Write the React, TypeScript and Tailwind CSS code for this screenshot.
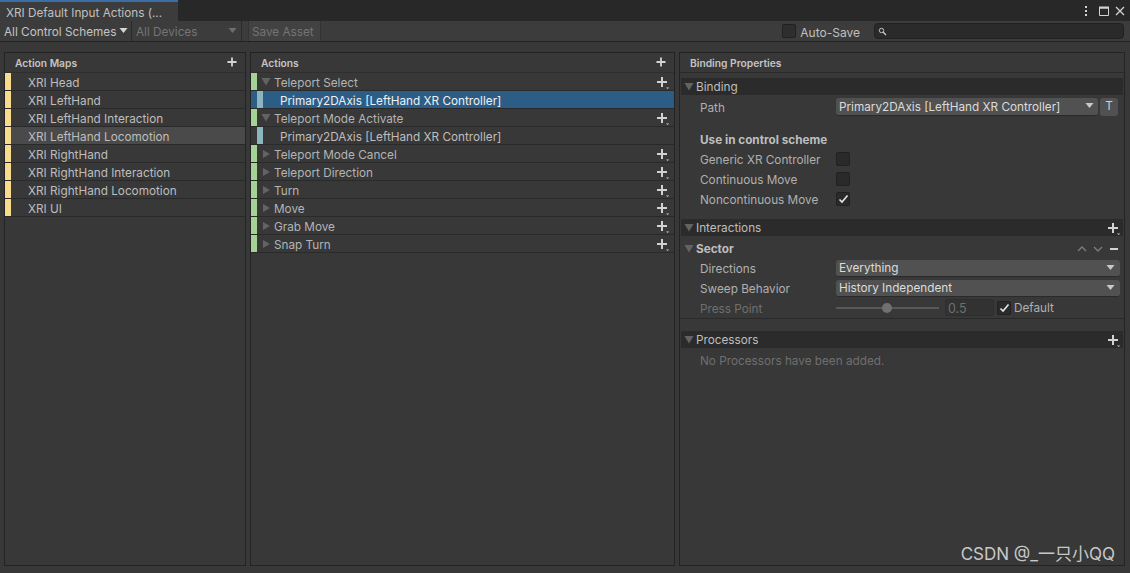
const maps = [
  "XRI Head",
  "XRI LeftHand",
  "XRI LeftHand Interaction",
  "XRI LeftHand Locomotion",
  "XRI RightHand",
  "XRI RightHand Interaction",
  "XRI RightHand Locomotion",
  "XRI UI",
];

const actions = [
  { name: "Teleport Select", open: true, binding: "Primary2DAxis [LeftHand XR Controller]", selected: true },
  { name: "Teleport Mode Activate", open: true, binding: "Primary2DAxis [LeftHand XR Controller]", selected: false },
  { name: "Teleport Mode Cancel" },
  { name: "Teleport Direction" },
  { name: "Turn" },
  { name: "Move" },
  { name: "Grab Move" },
  { name: "Snap Turn" },
];

const PlusMore = () => (
  <svg width="14" height="14" viewBox="0 0 14 14" className="mt-[3px] shrink-0">
    <path d="M5 1h2v4h4v2H7v4H5V7H1V5h4z" fill="#d2d2d2" />
    <path d="M10 11.5h3.2l-1.6 1.5z" fill="#c4c4c4" />
  </svg>
);

const Plus = () => (
  <svg width="10" height="10" viewBox="0 0 11 11" className="mb-[2px] shrink-0">
    <path d="M4.5 0.5h2v4h4v2h-4v4h-2v-4h-4v-2h4z" fill="#d2d2d2" />
  </svg>
);

const Fold = ({ open }: { open?: boolean }) => (
  <svg width="10" height="10" viewBox="0 0 10 10" className="mt-[1px] shrink-0">
    {open ? <path d="M0.5 1h9L5 8.5z" fill="#636363" /> : <path d="M2 1v8l7-4z" fill="#636363" />}
  </svg>
);

const Caret = ({ color = "#c8c8c8" }: { color?: string }) => (
  <svg width="9" height="6" viewBox="0 0 9 6" className="shrink-0">
    <path d="M0.5 0h8L4.5 5z" fill={color} />
  </svg>
);

const Check = () => (
  <svg width="11" height="10" viewBox="0 0 11 10">
    <path d="M1.5 5.5 4 8l5.5-6.5" stroke="#e6e6e6" strokeWidth="1.6" fill="none" />
  </svg>
);

const Box = ({ checked }: { checked?: boolean }) => (
  <div className="mb-[2px] flex h-[14px] w-[14px] items-center justify-center rounded-[2px] border border-[#212121] bg-[#2a2a2a]">
    {checked && <Check />}
  </div>
);

const Section = ({ title, add }: { title: string; add?: boolean }) => (
  <div className="mx-[1px] flex h-[17px] items-center bg-[#2b2b2b] pl-[3px] pr-[2px] text-[#bebebe]">
    <Fold open />
    <span className="ml-[2px] flex-1 pt-[3px]">{title}</span>
    {add && <PlusMore />}
  </div>
);

const Select = ({ label }: { label: string }) => (
  <div className="flex h-[17px] w-[284px] items-center rounded-[3px] border-b border-[#2a2a2a] bg-[#515151] pl-[3px] pr-[5px] text-[#dcdcdc]">
    <span className="flex-1 pt-[2px]">{label}</span>
    <Caret />
  </div>
);

const CheckRow = ({ label, checked }: { label: string; checked?: boolean }) => (
  <div className="flex h-[20px] items-center pl-[20px] text-[#b0b0b0]">
    <span className="w-[136px] pt-[1px]">{label}</span>
    <Box checked={checked} />
  </div>
);

export default function App() {
  return (
    <div
      className="relative flex h-[573px] w-[1130px] flex-col overflow-hidden bg-[#383838] text-[11.75px] leading-none"
      style={{ fontFamily: "Inter, 'Noto Sans CJK SC', sans-serif" }}
    >
      {/* tab strip */}
      <div className="flex h-[21px] items-stretch bg-[#282828]">
        <div className="flex w-[178px] items-center border-t-2 border-[#3a6ea5] bg-[#3c3c3c] pl-[6px] pt-[4px] text-[#c0c0c0]">
          XRI Default Input Actions (...
        </div>
        <div className="ml-auto flex items-center pr-[5px]">
          <svg width="4" height="12" viewBox="0 0 4 12">
            <path d="M1 1h2v2H1zM1 5h2v2H1zM1 9h2v2H1z" fill="#d2d2d2" />
          </svg>
          <svg width="10" height="10" viewBox="0 0 10 10" className="ml-[11px]">
            <path d="M0.5 2h9v7.5h-9z" fill="none" stroke="#d2d2d2" />
            <path d="M0 0.5h10v2H0z" fill="#d2d2d2" />
          </svg>
          <svg width="10" height="10" viewBox="0 0 10 10" className="ml-[6px]">
            <path d="M1 1l8 8M9 1l-8 8" stroke="#d2d2d2" strokeWidth="1.3" />
          </svg>
        </div>
      </div>

      {/* toolbar */}
      <div className="flex h-[21px] items-stretch border-b border-[#232323] bg-[#3c3c3c]">
        <div className="flex w-[132px] items-center gap-[3px] whitespace-nowrap border-r border-[#2a2a2a] pl-[4px] text-[#c4c4c4]">
          <span className="pt-[4px]">All Control Schemes</span>
          <Caret color="#d6d6d6" />
        </div>
        <div className="flex w-[110px] items-center justify-between border-r border-[#2a2a2a] pl-[4px] pr-[4px] text-[#757575]">
          <span className="pt-[4px]">All Devices</span>
          <Caret color="#6e6e6e" />
        </div>
        <div className="ml-[6px] flex w-[73px] items-center border-x border-[#333333] bg-[#424242] pl-[3px] pt-[4px] text-[#747474]">
          Save Asset
        </div>
        <div className="ml-auto flex items-center pr-[6px]">
          <div className="h-[14px] w-[14px] rounded-[2px] border border-[#212121] bg-[#2e2e2e]" />
          <span className="ml-[4px] mt-[4px] text-[12px] text-[#c0c0c0]">Auto-Save</span>
          <div className="ml-[14px] flex h-[16px] w-[250px] items-center rounded-[4px] border border-[#212121] bg-[#2a2a2a] pl-[3px]">
            <svg width="9" height="9" viewBox="0 0 9 9">
              <circle cx="3.5" cy="3.5" r="2.2" fill="none" stroke="#c4c4c4" />
              <path d="M5 5l3 3" stroke="#c4c4c4" strokeWidth="1.4" />
            </svg>
          </div>
        </div>
      </div>

      <div className="flex flex-1 gap-[4px] pb-[7px] pl-[4px] pr-[5px] pt-[10px]">
        {/* action maps */}
        <div className="flex w-[242px] flex-col border border-[#232323]">
          <div className="flex h-[20px] items-center justify-between border-b border-[#2f2f2f] pl-[10px] pr-[8px] text-[10.25px] font-semibold text-[#c4c4c4]">
            <span className="pt-[2px]">Action Maps</span>
            <Plus />
          </div>
          {maps.map((m) => (
            <div
              key={m}
              className={`flex h-[18px] items-center border-b border-[#2a2a2a] ${
                m === "XRI LeftHand Locomotion" ? "bg-[#4a4a4a]" : ""
              }`}
            >
              <div className="h-full w-[6px] bg-[#f7dd8b]" />
              <span className="ml-[17px] pt-[5px] text-[#bebebe]">{m}</span>
            </div>
          ))}
        </div>

        {/* actions */}
        <div className="flex w-[425px] flex-col border border-[#232323]">
          <div className="flex h-[20px] items-center justify-between border-b border-[#2f2f2f] pl-[10px] pr-[8px] text-[10.25px] font-semibold text-[#c4c4c4]">
            <span className="pt-[2px]">Actions</span>
            <Plus />
          </div>
          {actions.map((a) => (
            <div key={a.name}>
              <div className="flex h-[18px] items-center border-b border-[#2a2a2a] pr-[4px]">
                <div className="h-full w-[6px] bg-[#a5d295]" />
                <span className="ml-[4px]">
                  <Fold open={a.open} />
                </span>
                <span className="ml-[3px] flex-1 pt-[5px] text-[#b4b4b4]">{a.name}</span>
                <PlusMore />
              </div>
              {a.binding && (
                <div
                  className={`flex h-[18px] items-center border-b border-[#2a2a2a] ${
                    a.selected ? "bg-[#2c5d87] text-[#f0f0f0]" : "text-[#bebebe]"
                  }`}
                >
                  <div className="h-full w-[6px]" />
                  <div className="h-full w-[6px] bg-[#8bb6bd]" />
                  <span className="ml-[17px] pt-[5px]">{a.binding}</span>
                </div>
              )}
            </div>
          ))}
        </div>

        {/* binding properties */}
        <div className="flex flex-1 flex-col border border-[#232323]">
          <div className="flex h-[20px] items-center border-b border-[#2a2a2a] pl-[10px] pt-[2px] text-[10.25px] font-semibold text-[#c4c4c4]">
            Binding Properties
          </div>
          <div className="mt-[5px]">
            <Section title="Binding" />
          </div>
          <div className="mt-[2px] flex h-[19px] items-center pl-[20px] text-[#b0b0b0]">
            <span className="w-[136px] pt-[4px]">Path</span>
            <div className="flex h-[18px] w-[262px] items-center rounded-[3px] border-b border-[#2a2a2a] bg-[#515151] pl-[3px] pr-[4px] text-[#dcdcdc]">
              <span className="flex-1 pt-[3px]">Primary2DAxis [LeftHand XR Controller]</span>
              <Caret />
            </div>
            <div className="ml-[2px] flex h-[18px] w-[18px] items-center justify-center rounded-[3px] bg-[#515151] pt-[1px] text-[#d0d0d0]">
              T
            </div>
          </div>
          <div className="ml-[20px] mt-[18px] flex h-[14px] items-center font-bold text-[#bebebe]">
            Use in control scheme
          </div>
          <div className="mt-[2px]">
            <CheckRow label="Generic XR Controller" />
            <CheckRow label="Continuous Move" />
            <CheckRow label="Noncontinuous Move" checked />
          </div>
          <div className="mt-[9px]">
            <Section title="Interactions" add />
          </div>
          <div className="mt-[4px] flex h-[17px] items-center pl-[4px] pr-[6px]">
            <Fold open />
            <span className="ml-[2px] flex-1 pt-[2px] font-bold text-[#bebebe]">Sector</span>
            <svg width="10" height="6" viewBox="0 0 10 6">
              <path d="M1 5l4-4 4 4" stroke="#7d7d7d" strokeWidth="1.3" fill="none" />
            </svg>
            <svg width="10" height="6" viewBox="0 0 10 6" className="ml-[6px]">
              <path d="M1 1l4 4 4-4" stroke="#7d7d7d" strokeWidth="1.3" fill="none" />
            </svg>
            <div className="ml-[7px] h-[2px] w-[8px] bg-[#d2d2d2]" />
          </div>
          <div className="mt-[1px] flex h-[20px] items-center pl-[20px] text-[#b0b0b0]">
            <span className="w-[136px] pt-[4px]">Directions</span>
            <Select label="Everything" />
          </div>
          <div className="flex h-[20px] items-center pl-[20px] text-[#b0b0b0]">
            <span className="w-[136px] pt-[4px]">Sweep Behavior</span>
            <Select label="History Independent" />
          </div>
          <div className="flex h-[21px] items-center border-b border-[#2a2a2a] pb-[1px] pl-[20px] text-[#6f6f6f]">
            <span className="w-[136px] pt-[4px]">Press Point</span>
            <div className="relative h-[2px] w-[103px] bg-[#585858]">
              <div className="absolute left-[46px] top-[-4px] h-[10px] w-[10px] rounded-full bg-[#707070]" />
            </div>
            <div className="ml-[6px] flex h-[17px] w-[49px] items-center rounded-[3px] border border-[#2e2e2e] bg-[#323232] pl-[2px] pt-[3px] text-[12.5px]">
              0.5
            </div>
            <div className="ml-[3px] mt-[2px]">
              <Box checked />
            </div>
            <span className="ml-[3px] pt-[2px] text-[#b0b0b0]">Default</span>
          </div>
          <div className="mt-[12px]">
            <Section title="Processors" add />
          </div>
          <div className="ml-[20px] mt-[7px] flex h-[14px] items-center text-[#6f6f6f]">
            No Processors have been added.
          </div>
        </div>
      </div>

      {/* watermark */}
      <div className="absolute bottom-[10px] right-[15px] text-[17px] text-[#c8c8c8]">CSDN @_一只小QQ</div>
    </div>
  );
}
